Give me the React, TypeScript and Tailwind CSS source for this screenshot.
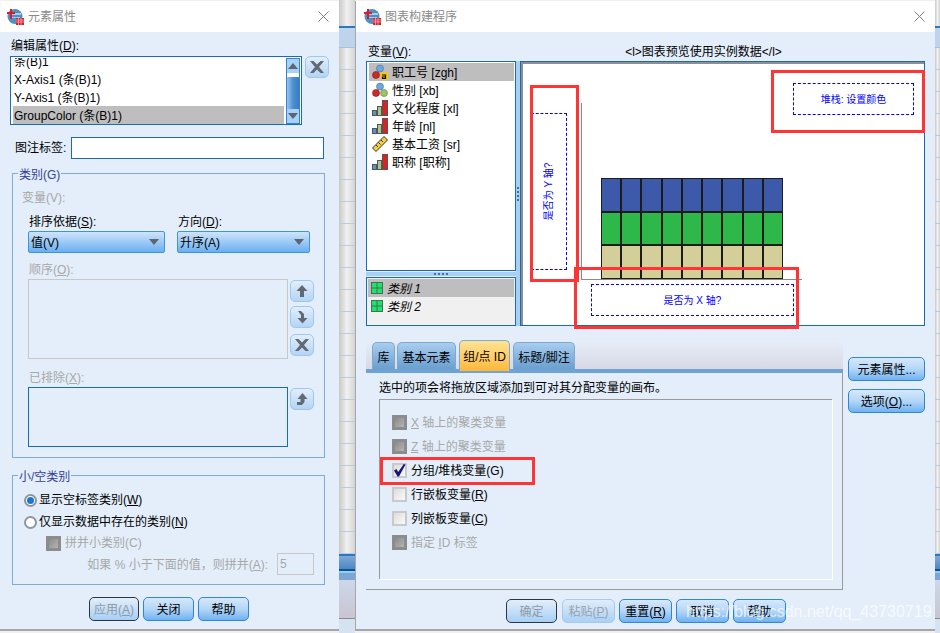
import type { ReactNode } from 'react';

const btn = 'flex items-center justify-center h-[24px] pt-[1px] rounded-[5px] border text-[12px] text-black bg-gradient-to-b from-[#d6e8fb] via-[#b4d6f8] to-[#6fb2f0] border-[#2f86d8]';
const btnDefault = 'flex items-center justify-center h-[24px] pt-[1px] rounded-[5px] border text-[12px] text-[#8f9aa5] bg-gradient-to-b from-[#e4eefa] to-[#a6cff5] border-[#2d3640]';
const btnOff = 'flex items-center justify-center h-[24px] pt-[1px] rounded-[5px] border text-[12px] text-[#98a3ae] bg-gradient-to-b from-[#e0edfb] to-[#a9d0f5] border-[#a5caee]';
const tab = 'h-[27px] leading-[30px] text-center rounded-t-[5px] border border-b-0 border-[#7daad3] bg-gradient-to-b from-[#a9cdee] to-[#6a9fcf]';

function Logo() {
  return (
    <svg width="17" height="17" viewBox="0 0 17 17" className="shrink-0">
      <circle cx="8" cy="8.5" r="7.5" fill="#4f8fc4" />
      <path d="M3 5h11v2H3zM4 9h9v1H4z" fill="#a9cbe6" />
      <path d="M3 1h2v3h3v2H5v5H3V6H0V4h3z" fill="#d3202f" />
      <rect x="9" y="10" width="8" height="7" fill="#d3202f" />
      <path d="M9 12h8M9 14h8M11.5 10v7M14 10v7" stroke="#f3b8bd" strokeWidth="0.7" />
    </svg>
  );
}

function CloseX() {
  return (
    <svg width="11" height="11" viewBox="0 0 11 11">
      <path d="M0.5 0.5l10 10M10.5 0.5l-10 10" stroke="#7f7f7f" strokeWidth="1" />
    </svg>
  );
}

function IconBtn({ d, className }: { d: string; className: string }) {
  return (
    <div className={'flex items-center justify-center w-[24px] h-[22px] rounded-[5px] border border-[#9fc8f0] bg-gradient-to-b from-[#e2eefb] to-[#b4d4f5] ' + className}>
      <svg width="14" height="14" viewBox="0 0 14 14">
        <path d={d} fill="#5f6a74" />
      </svg>
    </div>
  );
}

const xIcon = 'M0 1h3.500l3.500 3.500L10.500 1H14L9 7l5 6h-3.500L7 9.500 3.500 13H0l5-6z';
const upIcon = 'M7 1l5.500 6H9v6H5V7H1.500z';
const downBent = 'M3 1l3 0 3 3v4h3.500L7.500 13.500 2.500 8H6V5z';
const upBent = 'M7.500 1l5 6H9.500v3L7 13H2v-3h3.500V7H2.500z';

function Triangle({ up }: { up?: boolean }) {
  return (
    <svg width="10" height="6" viewBox="0 0 10 6">
      <path d={up ? 'M5 0l5 6H0z' : 'M0 0h10L5 6z'} fill="#5c6670" />
    </svg>
  );
}

function Combo({ text, className }: { text: ReactNode; className: string }) {
  return (
    <div className={'flex items-center justify-between h-[22px] pl-[2px] pr-[5px] rounded-[2px] border border-[#3f94e0] bg-gradient-to-b from-[#cfe4fa] to-[#68aff0] text-[12px] text-black ' + className}>
      <span className="pt-[1px]">{text}</span>
      <Triangle />
    </div>
  );
}

function GrayCheck() {
  return (
    <div className="flex items-center justify-center w-[15px] h-[15px] bg-[#8c8c8c] shrink-0">
      <div className="w-[9px] h-[9px] bg-gradient-to-br from-[#8a8a8a] to-[#b5b5b5]" />
    </div>
  );
}

function OpenCheck({ checked }: { checked?: boolean }) {
  return (
    <div className="flex items-center justify-center w-[15px] h-[15px] border-2 border-[#c9c9c9] bg-gradient-to-br from-[#dcdcdc] to-[#fafafa] shrink-0">
      {checked && (
        <svg width="13" height="13" viewBox="0 0 13 13" className="shrink-0">
          <path d="M1 6.500L3.500 5 5.200 8 10.800 0 12.500 0.500 6 12.500H4.500z" fill="#15157a" />
        </svg>
      )}
    </div>
  );
}

function Radio({ on }: { on?: boolean }) {
  return (
    <div className="flex items-center justify-center w-[13px] h-[13px] rounded-full border-2 border-[#8a96a0] bg-white shrink-0">
      {on && <div className="w-[7px] h-[7px] rounded-full bg-[#1f74d0]" />}
    </div>
  );
}

function Balls() {
  return (
    <svg width="16" height="16" viewBox="0 0 16 16" className="shrink-0">
      <circle cx="8" cy="4.500" r="3.500" fill="#6fa6dc" stroke="#3f6ea0" strokeWidth="0.6" />
      <circle cx="4" cy="11" r="3.500" fill="#cf2a2a" stroke="#7c1616" strokeWidth="0.6" />
      <circle cx="12" cy="11" r="3.500" fill="#9cc46a" stroke="#5d7f3a" strokeWidth="0.6" />
    </svg>
  );
}

function BallsTag() {
  return (
    <svg width="16" height="16" viewBox="0 0 16 16" className="shrink-0">
      <circle cx="8" cy="4.500" r="3.500" fill="#6fa6dc" stroke="#3f6ea0" strokeWidth="0.6" />
      <circle cx="4" cy="11" r="3.500" fill="#cf2a2a" stroke="#7c1616" strokeWidth="0.6" />
      <rect x="8.500" y="8" width="7.500" height="8" fill="#f5c518" />
      <path d="M10 11h3.500v3.500H10.500v-1.500h3" fill="none" stroke="#111" strokeWidth="1.200" />
    </svg>
  );
}

function Bars() {
  return (
    <svg width="16" height="16" viewBox="0 0 16 16" className="shrink-0">
      <rect x="0.500" y="10.500" width="4" height="5" fill="#5b93c9" stroke="#555" />
      <rect x="5.500" y="6.500" width="4" height="9" fill="#a5c98a" stroke="#555" />
      <rect x="10.500" y="0.500" width="5" height="15" fill="#e0201f" stroke="#555" />
    </svg>
  );
}

function Ruler() {
  return (
    <svg width="16" height="16" viewBox="0 0 16 16" className="shrink-0">
      <path d="M0.500 12L12 0.500l3.500 3.500L4 15.500z" fill="#f2cf45" stroke="#333" />
      <path d="M4 9l2 2M6.500 6.500l2 2M9 4l2 2" stroke="#333" />
    </svg>
  );
}

function CatIcon() {
  return (
    <svg width="12" height="12" viewBox="0 0 12 12" className="shrink-0">
      <rect width="12" height="12" fill="#4f6b57" />
      <rect x="1" y="1" width="4.500" height="4.500" fill="#14e86a" />
      <rect x="6.500" y="1" width="4.500" height="4.500" fill="#14e86a" />
      <rect x="1" y="6.500" width="4.500" height="4.500" fill="#14e86a" />
      <rect x="6.500" y="6.500" width="4.500" height="4.500" fill="#14e86a" />
    </svg>
  );
}

function Strip({ className }: { className: string }) {
  return (
    <div className={'flex flex-col h-[633px] overflow-hidden bg-gradient-to-r from-[#c9c9c9] via-[#f1f1f1] to-[#d4d4d4] ' + className}>
      <div className="h-[26px] shrink-0" />
      <div className="h-[2px] shrink-0 bg-[#2b78c0]" />
      <div className="h-[20px] shrink-0 bg-[#bfd3ea] border-b border-[#a8c0da]" />
      {Array.from({ length: 23 }).map((_, i) => (
        <div key={i} className="h-[22px] shrink-0 border-b border-[#b9cbdc]" />
      ))}
      <div className="h-[2px] shrink-0 bg-[#2b78c0]" />
      <div className="h-[13px] shrink-0 bg-gradient-to-b from-[#7fa9d6] to-[#4d86c4]" />
      <div className="h-[2px] shrink-0 bg-[#12508f]" />
      <div className="h-[2px] shrink-0 bg-[#8fd0f2]" />
      <div className="h-[7px] shrink-0 bg-[#7ba6d2]" />
      <div className="h-[38px] shrink-0 bg-gradient-to-b from-[#ccd8e8] to-[#c9c5d2]" />
      <div className="h-[1px] shrink-0 bg-[#8a8a8a]" />
      <div className="h-[14px] shrink-0 bg-[#d5e2f0]" />
    </div>
  );
}

function ElementDialog() {
  return (
    <div className="w-[339px] h-[630px] mt-[1px] flex flex-col shrink-0 bg-[#e3eefa] border-b-2 border-[#a6a6a6]">
      <div className="flex items-center h-[31px] shrink-0 bg-white pl-[7px] pr-[10px]">
        <Logo />
        <span className="ml-[4px] pt-[1px] text-[12px] text-[#8a8a8a]">元素属性</span>
        <span className="ml-auto flex"><CloseX /></span>
      </div>

      <div className="pl-[10px] flex flex-col">
        <div className="mt-[6px] h-[16px] leading-[16px] pl-[1px]">编辑属性(<u>D</u>):</div>

        <div className="mt-[2px] flex items-start">
          <div className="flex w-[292px] h-[69px] border border-[#1a6ab5] bg-white pl-[2px] pt-[1px]">
            <div className="w-[271px] h-[66px] overflow-hidden">
              <div className="-mt-[6px] flex flex-col">
                <div className="h-[18px] leading-[20px] pl-[1px]">条(B)1</div>
                <div className="h-[18px] leading-[20px] pl-[1px]">X-Axis1 (条(B)1)</div>
                <div className="h-[18px] leading-[20px] pl-[1px]">Y-Axis1 (条(B)1)</div>
                <div className="h-[18px] leading-[20px] pl-[1px] bg-[#bebebe]">GroupColor (条(B)1)</div>
              </div>
            </div>
            <div className="ml-[2px] w-[14px] h-[66px] flex flex-col border border-[#2f86d8] bg-gradient-to-r from-[#9cc4ea] via-[#4d8fd0] to-[#3a7cc0]">
              <div className="h-[14px] flex items-center justify-center bg-[#a9d0f5]"><Triangle up /></div>
              <div className="h-[4px] bg-white" />
              <div className="flex-1" />
              <div className="h-[14px] flex items-center justify-center bg-[#a9d0f5]"><Triangle /></div>
            </div>
          </div>
          <IconBtn d={xIcon} className="ml-[3px]" />
        </div>

        <div className="mt-[12px] pl-[5px] flex items-center">
          <span className="w-[56px]">图注标签:</span>
          <div className="w-[253px] h-[22px] border border-[#1a6ab5] bg-white" />
        </div>

        <div className="relative mt-[14px] ml-[2px] w-[313px] h-[285px] border border-[#7fabd6] flex flex-col">
          <span className="absolute -top-[7px] left-[5px] px-[1px] h-[14px] leading-[16px] bg-[#e3eefa] text-[#33409c]">类别(G)</span>
          <div className="mt-[16px] pl-[9px] h-[16px] leading-[16px] text-[#a8a8a8]">变量(V):</div>
          <div className="mt-[8px] pl-[16px] flex h-[16px] leading-[16px]">
            <span className="w-[149px]">排序依据(<u>S</u>):</span>
            <span>方向(<u>D</u>):</span>
          </div>
          <div className="mt-[1px] pl-[15px] flex">
            <Combo text="值(V)" className="w-[137px]" />
            <Combo text="升序(A)" className="w-[133px] ml-[12px]" />
          </div>
          <div className="mt-[9px] pl-[16px] h-[16px] leading-[16px] text-[#a8a8a8]">顺序(<u>O</u>):</div>
          <div className="mt-[1px] pl-[15px] flex">
            <div className="w-[260px] h-[80px] border border-[#c8c8c8]" />
            <div className="ml-[2px] pt-[1px] flex flex-col">
              <IconBtn d={upIcon} className="" />
              <IconBtn d={downBent} className="mt-[4px]" />
              <IconBtn d={xIcon} className="mt-[6px]" />
            </div>
          </div>
          <div className="mt-[11px] pl-[16px] h-[16px] leading-[16px] text-[#a8a8a8]">已排除(<u>X</u>):</div>
          <div className="mt-[1px] pl-[15px] flex">
            <div className="w-[260px] h-[60px] border border-[#1a6ab5]" />
            <div className="ml-[2px] pt-[1px]"><IconBtn d={upBent} className="" /></div>
          </div>
        </div>

        <div className="relative mt-[17px] ml-[2px] w-[313px] h-[110px] border border-[#7fabd6] flex flex-col">
          <span className="absolute -top-[7px] left-[5px] px-[1px] h-[14px] leading-[16px] bg-[#e3eefa] text-[#33409c]">小/空类别</span>
          <div className="mt-[13px] pl-[11px] h-[22px] flex items-center">
            <Radio on />
            <span className="ml-[2px]">显示空标签类别(<u>W</u>)</span>
          </div>
          <div className="pl-[11px] h-[22px] flex items-center">
            <Radio />
            <span className="ml-[2px]">仅显示数据中存在的类别(<u>N</u>)</span>
          </div>
          <div className="pl-[33px] h-[20px] flex items-center">
            <GrayCheck />
            <span className="ml-[4px] text-[#a8a8a8]">拼并小类别(C)</span>
          </div>
          <div className="pr-[10px] flex items-center justify-end text-[#a8a8a8]">
            <span className="pt-[1px]">如果 % 小于下面的值，则拼并(<u>A</u>):</span>
            <div className="ml-[9px] w-[37px] h-[22px] leading-[20px] pl-[2px] border border-[#c8c8c8]">5</div>
          </div>
        </div>

        <div className="mt-[12px] ml-[79px] flex">
          <div className={btnDefault + ' w-[50px]'}>应用(<u>A</u>)</div>
          <div className={btn + ' w-[51px] ml-[4px]'}>关闭</div>
          <div className={btn + ' w-[51px] ml-[4px]'}>帮助</div>
        </div>
      </div>
    </div>
  );
}

function Preview() {
  return (
    <div className="relative w-[405px] h-[265px] mt-[1px] border border-[#1a6ab5] bg-white overflow-hidden">
      <div className="absolute inset-0 border-t-2 border-l-2 border-[#8f8f8f]" />
      {/* y axis and x axis of the sample chart */}
      <div className="absolute left-[60px] top-[41px] w-[1px] h-[176px] bg-[#8a8a8a]" />
      <div className="absolute left-[60px] top-[217px] w-[221px] h-[1px] bg-[#8a8a8a]" />
      <div className="absolute left-[80px] top-[116px] w-[182px] h-[101px] grid grid-cols-9 grid-rows-3 gap-[2px] p-[1px] bg-[#1c1c1c]">
        {['bg-[#3d59a9]', 'bg-[#2eb84a]', 'bg-[#d4cf99]'].map((c) =>
          Array.from({ length: 9 }).map((_, i) => <div key={c + i} className={c} />)
        )}
      </div>
      <div className="absolute left-[10px] top-[51px] w-[36px] h-[157px] border border-dashed border-[#0000ff] flex items-center justify-center">
        <span className="-rotate-90 text-[10px] text-[#0000ff] whitespace-nowrap">是否为 Y 轴?</span>
      </div>
      <div className="absolute left-[272px] top-[21px] w-[121px] h-[32px] border border-dashed border-[#0000ff] flex items-center justify-center text-[10px] text-[#0000ff]">堆栈: 设置颜色</div>
      <div className="absolute left-[70px] top-[222px] w-[203px] h-[32px] border border-dashed border-[#0000ff] flex items-center justify-center text-[10px] text-[#0000ff]">是否为 X 轴?</div>
    </div>
  );
}

const variables: { icon: ReactNode; name: string }[] = [
  { icon: <BallsTag />, name: '职工号 [zgh]' },
  { icon: <Balls />, name: '性别 [xb]' },
  { icon: <Bars />, name: '文化程度 [xl]' },
  { icon: <Bars />, name: '年龄 [nl]' },
  { icon: <Ruler />, name: '基本工资 [sr]' },
  { icon: <Bars />, name: '职称 [职称]' },
];

function BuilderDialog() {
  return (
    <div className="w-[580px] h-[630px] mt-[1px] flex flex-col shrink-0 bg-[#e3eefa] border-l border-b-2 border-[#a6a6a6]">
      <div className="flex items-center h-[31px] shrink-0 bg-white pl-[8px] pr-[10px]">
        <Logo />
        <span className="ml-[4px] pt-[1px] text-[12px] text-[#8a8a8a]">图表构建程序</span>
        <span className="ml-auto flex"><CloseX /></span>
      </div>

      <div className="pl-[10px] flex flex-col">
        <div className="flex mt-[12px]">
          <div className="w-[150px] flex flex-col">
            <div className="h-[16px] leading-[16px] pl-[2px]">变量(<u>V</u>):</div>
            <div className="mt-[1px] h-[210px] border border-[#1a6ab5] bg-white p-[1px] pl-[2px] flex flex-col">
              {variables.map((v, i) => (
                <div key={v.name} className={'h-[18px] shrink-0 flex items-center pl-[3px] ' + (i === 0 ? 'bg-[#bebebe]' : '')}>
                  {v.icon}
                  <span className="ml-[4px] pt-[1px]">{v.name}</span>
                </div>
              ))}
            </div>
            <div className="h-[6px] flex items-center justify-center bg-[#a8d0f2] border-y border-[#e3eefa]">
              <div className="w-[14px] border-t-2 border-dotted border-[#4a6f94]" />
            </div>
            <div className="h-[49px] border border-[#1a6ab5] bg-[#f0f0f0] p-[1px] flex flex-col">
              <div className="h-[18px] shrink-0 flex items-center pl-[3px] bg-[#bebebe]">
                <CatIcon />
                <span className="ml-[4px] pt-[1px] italic">类别 1</span>
              </div>
              <div className="h-[18px] shrink-0 flex items-center pl-[3px]">
                <CatIcon />
                <span className="ml-[4px] pt-[1px] italic">类别 2</span>
              </div>
            </div>
          </div>

          <div className="w-[4px] mt-[17px] flex items-center justify-center bg-[#a8d0f2]">
            <div className="h-[14px] border-l-2 border-dotted border-[#4a6f94]" />
          </div>

          <div className="flex flex-col">
            <div className="h-[16px] leading-[16px] text-center pr-[38px]">&lt;l&gt;图表预览使用实例数据&lt;/l&gt;</div>
            <Preview />
          </div>
        </div>

        <div className="mt-[14px] flex">
          <div className="w-[477px] flex flex-col">
            <div className="h-[29px] flex items-end pl-[6px] bg-gradient-to-b from-[#e6eef8] to-[#d8d9e6]">
              <div className={tab + ' w-[23px]'}>库</div>
              <div className={tab + ' w-[59px] ml-[2px]'}>基本元素</div>
              <div className="relative z-10 w-[51px] h-[31px] -mb-[2px] ml-[3px] leading-[33px] text-center rounded-t-[5px] border border-b-0 border-[#7daad3] bg-gradient-to-b from-[#ffe391] to-[#ffb836]">组/点 ID</div>
              <div className={tab + ' w-[62px] ml-[3px]'}>标题/脚注</div>
            </div>
            <div className="h-[4px] bg-[#6fa3d4]" />
            <div className="h-[217px] border-r border-b border-[#999] flex flex-col">
              <div className="mt-[7px] h-[16px] leading-[16px] pl-[13px]">选中的项会将拖放区域添加到可对其分配变量的画布。</div>
              <div className="mt-[3px] ml-[13px] w-[453px] h-[180px] border-t border-l border-[#999] shadow-[1px_1px_0_#fff] pt-[10px] pl-[12px] flex flex-col">
                <div className="h-[24px] flex items-center text-[#a8a8a8]"><GrayCheck /><span className="ml-[4px] pt-[1px]"><u>X</u> 轴上的聚类变量</span></div>
                <div className="h-[24px] flex items-center text-[#a8a8a8]"><GrayCheck /><span className="ml-[4px] pt-[1px]"><u>Z</u> 轴上的聚类变量</span></div>
                <div className="h-[24px] flex items-center"><OpenCheck checked /><span className="ml-[4px] pt-[1px]">分组/堆栈变量(G)</span></div>
                <div className="h-[24px] flex items-center"><OpenCheck /><span className="ml-[4px] pt-[1px]">行嵌板变量(<u>R</u>)</span></div>
                <div className="h-[24px] flex items-center"><OpenCheck /><span className="ml-[4px] pt-[1px]">列嵌板变量(<u>C</u>)</span></div>
                <div className="h-[24px] flex items-center text-[#a8a8a8]"><GrayCheck /><span className="ml-[4px] pt-[1px]">指定 <u>I</u>D 标签</span></div>
              </div>
            </div>
            <div className="mt-[9px] ml-[140px] flex">
              <div className={btnDefault + ' w-[51px]'}>确定</div>
              <div className={btnOff + ' w-[53px] ml-[5px]'}>粘贴(<u>P</u>)</div>
              <div className={btn + ' w-[53px] ml-[4px]'}>重置(<u>R</u>)</div>
              <div className={btn + ' w-[53px] ml-[4px]'}>取消</div>
              <div className={btn + ' w-[53px] ml-[4px]'}>帮助</div>
            </div>
          </div>

          <div className="ml-[5px] mt-[17px] flex flex-col">
            <div className={btn + ' w-[77px]'}>元素属性...</div>
            <div className={btn + ' w-[77px] mt-[8px]'}>选项(<u>O</u>)...</div>
          </div>
        </div>
      </div>
    </div>
  );
}

export default function App() {
  return (
    <div className="relative w-[940px] h-[633px] overflow-hidden flex items-start bg-[#f0f0f0] text-[12px] text-black font-['Liberation_Sans','Noto_Sans_CJK_SC',sans-serif]">
      <ElementDialog />
      <Strip className="w-[16px] shrink-0" />
      <BuilderDialog />
      <Strip className="w-[5px] shrink-0" />

      {/* red annotation boxes drawn over the screenshot */}
      <div className="absolute left-[530px] top-[85px] w-[49px] h-[197px] border-[3px] border-[#ff3535]" />
      <div className="absolute left-[771px] top-[70px] w-[154px] h-[63px] border-[3px] border-[#ff3535]" />
      <div className="absolute left-[574px] top-[267px] w-[225px] h-[62px] border-[3px] border-[#ff3535]" />
      <div className="absolute left-[380px] top-[457px] w-[155px] h-[28px] border-[3px] border-[#ff3535]" />

      <div className="absolute left-[686px] top-[602px] text-[16px] leading-[20px] text-white/70 font-['Liberation_Sans',sans-serif] whitespace-nowrap">https://blog.csdn.net/qq_43730719</div>
    </div>
  );
}
